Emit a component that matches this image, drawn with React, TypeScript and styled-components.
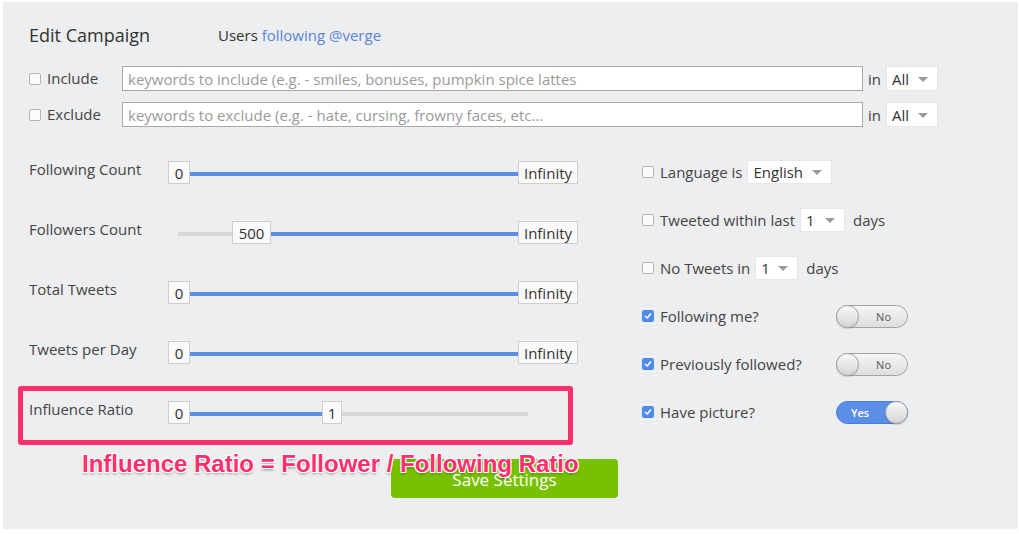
import styled, { createGlobalStyle } from "styled-components";

const GlobalStyle = createGlobalStyle`
    html, body {
        margin: 0;
        padding: 0;
        background: #ffffff;
    }
    body {
        font-family: "Open Sans", "Liberation Sans", sans-serif;
        color: #444;
    }
    * {
        box-sizing: border-box;
    }
`;

const Panel = styled.div`
    position: relative;
    width: 1015px;
    height: 527px;
    margin: 2px 0 0 3px;
    padding: 22px 26px 0 26px;
    background: #edeef0;
`;

const Header = styled.div`
    display: flex;
    align-items: center;
    height: 22px;
`;

const Title = styled.div`
    width: 189px;
    font-size: 18px;
    color: #333;
    line-height: 22px;
`;

const Users = styled.div`
    font-size: 15px;
    color: #333;
    span {
        color: #5b83d9;
    }
`;

const KeywordList = styled.div`
    display: flex;
    flex-direction: column;
    gap: 11px;
    margin-top: 20px;
`;

const KeywordRow = styled.div`
    display: flex;
    align-items: center;
    height: 25px;
`;

const CheckLabel = styled.label<{ $width?: number }>`
    display: flex;
    align-items: center;
    gap: 6px;
    width: ${(p) => (p.$width ? `${p.$width}px` : "auto")};
    font-size: 15px;
    color: #444;
    white-space: nowrap;
    padding-bottom: 1px;
`;

const Box = styled.span<{ $checked?: boolean }>`
    display: inline-flex;
    align-items: center;
    justify-content: center;
    width: 12px;
    height: 12px;
    margin-top: 1px;
    border-radius: 2px;
    border: 1px solid ${(p) => (p.$checked ? "#4a88ee" : "#b4b4b4")};
    background: ${(p) => (p.$checked ? "#4f8cf0" : "#fbfbfb")};
    flex: none;
`;

const KeywordInput = styled.input`
    width: 741px;
    height: 25px;
    padding: 0 5px;
    border: 1px solid #a8a8a8;
    background: #fff;
    font-family: "Open Sans", "Liberation Sans", sans-serif;
    font-size: 15px;
    color: #333;
    outline: none;
    &::placeholder {
        color: #9a9a9a;
    }
`;

const InText = styled.span`
    margin: 0 5px 0 5px;
    font-size: 15px;
    color: #444;
`;

const Select = styled.div<{ $width: number; $height?: number }>`
    position: relative;
    display: inline-flex;
    align-items: center;
    width: ${(p) => p.$width}px;
    height: ${(p) => p.$height ?? 24}px;
    padding-left: 5px;
    background: #fff;
    border: 1px solid #e6e6e6;
    font-size: 15px;
    color: #333;
    flex: none;
    &::after {
        content: "";
        position: absolute;
        right: 9px;
        top: 50%;
        margin-top: -2px;
        border-left: 5px solid transparent;
        border-right: 5px solid transparent;
        border-top: 5px solid #9a9a9a;
    }
`;

const Body = styled.div`
    display: flex;
    margin-top: 33px;
`;

const LeftColumn = styled.div`
    display: flex;
    flex-direction: column;
    gap: 37px;
    width: 548px;
    padding-top: 1px;
`;

const SliderRow = styled.div`
    display: flex;
    align-items: center;
    width: 549px;
    height: 23px;
`;

const SliderLabel = styled.div`
    width: 139px;
    font-size: 15px;
    color: #444;
    line-height: 20px;
    padding-bottom: 8px;
    white-space: nowrap;
`;

const Slider = styled.div`
    position: relative;
    width: 410px;
    height: 23px;
`;

const Track = styled.div<{ $fill?: boolean }>`
    position: absolute;
    top: 11px;
    height: 4px;
    background: ${(p) => (p.$fill ? "#5b8ee6" : "#d7d7d7")};
`;

const Handle = styled.div`
    position: absolute;
    top: 0;
    height: 23px;
    padding: 0 5px;
    display: flex;
    align-items: center;
    justify-content: center;
    background: #fafafa;
    border: 1px solid #cfcfcf;
    font-size: 15px;
    color: #333;
    white-space: nowrap;
`;

const Highlight = styled.div`
    width: 555px;
    margin: -15px 0 0 -11px;
    padding: 10px 0 16px 6px;
    border: 5px solid #ff2e6d;
    border-radius: 3px;
`;

const RightColumn = styled.div`
    display: flex;
    flex-direction: column;
    gap: 24px;
    margin-left: 65px;
`;

const OptionRow = styled.div`
    display: flex;
    align-items: center;
    gap: 5px;
    height: 24px;
    font-size: 15px;
    color: #444;
`;

const Days = styled.span`
    margin-left: 3px;
`;

const Toggle = styled.div<{ $on?: boolean }>`
    position: relative;
    width: 72px;
    height: 23px;
    border-radius: 12px;
    border: 1px solid ${(p) => (p.$on ? "#4a7fd4" : "#a5a5a5")};
    background: ${(p) =>
        p.$on ? "#5b8ee6" : "linear-gradient(#f6f6f6, #dedede)"};
    display: flex;
    align-items: center;
    justify-content: ${(p) => (p.$on ? "flex-start" : "flex-end")};
    padding: ${(p) => (p.$on ? "0 0 0 14px" : "0 16px 0 0")};
    font-size: 11px;
    font-weight: ${(p) => (p.$on ? 600 : 400)};
    color: ${(p) => (p.$on ? "#fff" : "#555")};
    &::before {
        content: "";
        position: absolute;
        top: -1px;
        ${(p) => (p.$on ? "right: -1px;" : "left: -1px;")}
        width: 23px;
        height: 23px;
        border-radius: 50%;
        border: 1px solid #a3a3a3;
        background: linear-gradient(#fafafa, #d4d4d4);
        box-shadow: 0 1px 1px rgba(0, 0, 0, 0.15);
        box-sizing: border-box;
    }
`;

const Annotation = styled.div`
    position: absolute;
    left: 79px;
    top: 448px;
    font-family: "Liberation Sans", Arial, sans-serif;
    font-weight: 700;
    font-size: 24px;
    line-height: 28px;
    color: #ff2e6d;
    white-space: nowrap;
    z-index: 2;
    text-shadow: -1px -1px 0 #fff, 1px -1px 0 #fff, -1px 1px 0 #fff,
        1px 1px 0 #fff, 0 0 2px #fff, 0 2px 3px rgba(0, 0, 0, 0.4);
`;

const SaveButton = styled.button`
    display: block;
    width: 227px;
    height: 39px;
    margin: 14px 0 0 362px;
    border: none;
    border-radius: 4px;
    background: #78c100;
    color: #fff;
    font-family: "Open Sans", "Liberation Sans", sans-serif;
    font-size: 17px;
    padding-top: 3px;
`;

function Check({ checked }: { checked?: boolean }) {
    return (
        <Box $checked={checked}>
            {checked && (
                <svg width="8" height="8" viewBox="0 0 8 8">
                    <path d="M1.3 4.2 L3.2 6 L6.7 1.8" fill="none" stroke="#fff" strokeWidth="1.5" strokeLinecap="round" strokeLinejoin="round" />
                </svg>
            )}
        </Box>
    );
}

type Knob = { text: string; left: number; width: number };

type SliderData = {
    label: string;
    lo: Knob;
    hi: Knob;
};

const INF: Knob = { text: "Infinity", left: 350, width: 60 };
const ZERO: Knob = { text: "0", left: 0, width: 22 };

const sliders: SliderData[] = [
    { label: "Following Count", lo: ZERO, hi: INF },
    { label: "Followers Count", lo: { text: "500", left: 64, width: 39 }, hi: INF },
    { label: "Total Tweets", lo: ZERO, hi: INF },
    { label: "Tweets per Day", lo: ZERO, hi: INF },
];

function RangeRow({ label, lo, hi }: SliderData) {
    return (
        <SliderRow>
            <SliderLabel>{label}</SliderLabel>
            <Slider>
                <Track style={{ left: 10, width: 350 }} />
                <Track $fill style={{ left: lo.left + lo.width, width: hi.left - lo.left - lo.width }} />
                <Handle style={{ left: lo.left, width: lo.width }}>{lo.text}</Handle>
                <Handle style={{ left: hi.left, width: hi.width }}>{hi.text}</Handle>
            </Slider>
        </SliderRow>
    );
}

export default function App() {
    return (
        <>
            <GlobalStyle />
            <Panel>
                <Header>
                    <Title>Edit Campaign</Title>
                    <Users>
                        Users <span>following @verge</span>
                    </Users>
                </Header>

                <KeywordList>
                    <KeywordRow>
                        <CheckLabel $width={93}>
                            <Check /> Include
                        </CheckLabel>
                        <KeywordInput placeholder="keywords to include (e.g. - smiles, bonuses, pumpkin spice lattes" />
                        <InText>in</InText>
                        <Select $width={52} $height={25}>All</Select>
                    </KeywordRow>
                    <KeywordRow>
                        <CheckLabel $width={93}>
                            <Check /> Exclude
                        </CheckLabel>
                        <KeywordInput placeholder="keywords to exclude (e.g. - hate, cursing, frowny faces, etc..." />
                        <InText>in</InText>
                        <Select $width={52} $height={25}>All</Select>
                    </KeywordRow>
                </KeywordList>

                <Body>
                    <LeftColumn>
                        {sliders.map((s) => (
                            <RangeRow key={s.label} {...s} />
                        ))}
                        <Highlight>
                            <RangeRow
                                label="Influence Ratio"
                                lo={ZERO}
                                hi={{ text: "1", left: 154, width: 20 }}
                            />
                        </Highlight>
                    </LeftColumn>

                    <RightColumn>
                        <OptionRow>
                            <CheckLabel>
                                <Check /> Language is
                            </CheckLabel>
                            <Select $width={85}>English</Select>
                        </OptionRow>
                        <OptionRow>
                            <CheckLabel>
                                <Check /> Tweeted within last
                            </CheckLabel>
                            <Select $width={45}>1</Select>
                            <Days>days</Days>
                        </OptionRow>
                        <OptionRow>
                            <CheckLabel>
                                <Check /> No Tweets in
                            </CheckLabel>
                            <Select $width={43}>1</Select>
                            <Days>days</Days>
                        </OptionRow>
                        <OptionRow>
                            <CheckLabel $width={189}>
                                <Check checked /> Following me?
                            </CheckLabel>
                            <Toggle>No</Toggle>
                        </OptionRow>
                        <OptionRow>
                            <CheckLabel $width={189}>
                                <Check checked /> Previously followed?
                            </CheckLabel>
                            <Toggle>No</Toggle>
                        </OptionRow>
                        <OptionRow>
                            <CheckLabel $width={189}>
                                <Check checked /> Have picture?
                            </CheckLabel>
                            <Toggle $on>Yes</Toggle>
                        </OptionRow>
                    </RightColumn>
                </Body>

                <SaveButton>Save Settings</SaveButton>
                <Annotation>Influence Ratio = Follower / Following Ratio</Annotation>
            </Panel>
        </>
    );
}
